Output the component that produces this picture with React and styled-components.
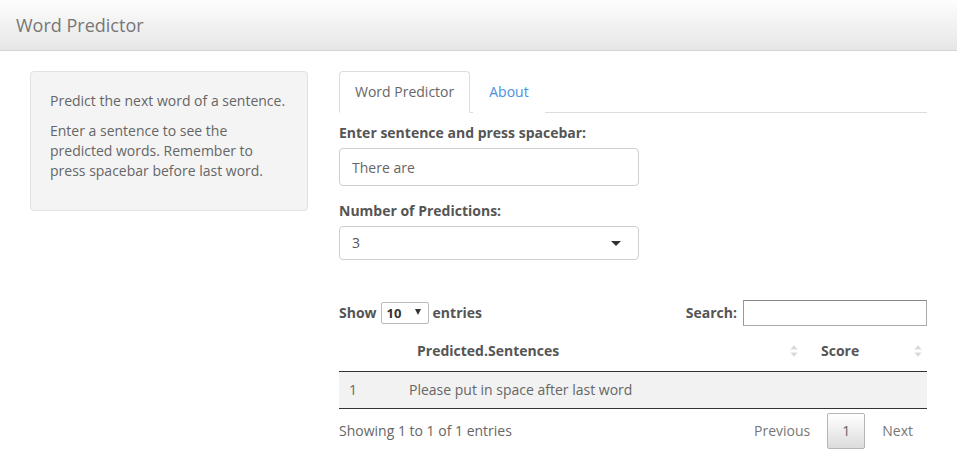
import React from 'react';
import styled, { createGlobalStyle } from 'styled-components';

const GlobalStyle = createGlobalStyle`
  body {
    margin: 0;
    font-family: "Open Sans", "Liberation Sans", sans-serif;
    font-size: 14px;
    line-height: 20px;
    color: #666;
    background: #fff;
  }
  * { box-sizing: border-box; }
`;

const App = () => {
  return (
    <>
      <GlobalStyle />
      <Navbar>
        <Brand>Word Predictor</Brand>
      </Navbar>
      <Page>
        <Sidebar>
          <Well>
            <Para>Predict the next word of a sentence.</Para>
            <Para>Enter a sentence to see the predicted words. Remember to press spacebar before last word.</Para>
          </Well>
        </Sidebar>
        <Main>
          <Tabs>
            <Tab active>Word Predictor</Tab>
            <Tab>About</Tab>
          </Tabs>
          <FormGroup>
            <Label>Enter sentence and press spacebar:</Label>
            <TextInput defaultValue="There are" />
          </FormGroup>
          <FormGroup>
            <Label>Number of Predictions:</Label>
            <SelectBox>
              <span>3</span>
              <Caret />
            </SelectBox>
          </FormGroup>
          <TableWrap>
            <TableTop>
              <LengthControl>
                Show
                <SmallSelect>
                  <span>10</span>
                  <SmallCaret />
                </SmallSelect>
                entries
              </LengthControl>
              <SearchControl>
                Search:
                <SearchInput />
              </SearchControl>
            </TableTop>
            <Table>
              <colgroup>
                <col style={{ width: 60 }} />
                <col style={{ width: 404 }} />
                <col />
              </colgroup>
              <thead>
                <tr>
                  <Th></Th>
                  <Th>
                    Predicted.Sentences
                    <SortIcon />
                  </Th>
                  <Th>
                    Score
                    <SortIcon />
                  </Th>
                </tr>
              </thead>
              <tbody>
                <Row odd>
                  <Td>1</Td>
                  <Td>Please put in space after last word</Td>
                  <Td></Td>
                </Row>
              </tbody>
            </Table>
            <TableBottom>
              <Info>Showing 1 to 1 of 1 entries</Info>
              <Pager>
                <PageLink>Previous</PageLink>
                <PageButton>1</PageButton>
                <PageLink last>Next</PageLink>
              </Pager>
            </TableBottom>
          </TableWrap>
        </Main>
      </Page>
    </>
  );
};

const SortIcon = () => (
  <SortSvg width="8" height="14" viewBox="0 0 8 14">
    <path d="M4 1 L7.5 5.5 L0.5 5.5 Z" fill="#d9d9d9" />
    <path d="M4 13 L7.5 8.5 L0.5 8.5 Z" fill="#d9d9d9" />
  </SortSvg>
);

export default App;

const Navbar = styled.div`
  height: 51px;
  background: linear-gradient(#fdfdfd, #e6e6e6);
  border-bottom: 1px solid #d4d4d4;
  display: flex;
  align-items: center;
  padding-left: 16px;
`;

const Brand = styled.div`
  font-size: 18px;
  color: #777;
  line-height: 20px;
  padding-bottom: 1px;
`;

const Page = styled.div`
  display: flex;
  gap: 31px;
  padding: 20px 30px 0 30px;
`;

const Sidebar = styled.div`
  width: 278px;
  flex-shrink: 0;
`;

const Well = styled.div`
  background: #f4f4f4;
  border: 1px solid #e2e2e2;
  border-radius: 4px;
  padding: 19px 19px 19px;
  min-height: 140px;
`;

const Para = styled.p`
  margin: 0 0 10px;
  &:last-child { margin-bottom: 0; }
`;

const Main = styled.div`
  flex: 1;
  min-width: 0;
`;

const Tabs = styled.div`
  display: flex;
  border-bottom: 1px solid #ddd;
  height: 42px;
  margin-bottom: 10px;
`;

const Tab = styled.div`
  padding: 10px 15px 11px;
  margin-right: 3px;
  border: 1px solid ${p => (p.active ? '#ddd' : 'transparent')};
  border-bottom-color: ${p => (p.active ? '#fff' : 'transparent')};
  border-radius: 4px 4px 0 0;
  background: #fff;
  color: ${p => (p.active ? '#666' : '#4a90e2')};
  height: 42px;
  line-height: 20px;
`;

const FormGroup = styled.div`
  margin-bottom: 15px;
`;

const Label = styled.div`
  font-weight: 700;
  color: #555;
  margin-bottom: 5px;
`;

const TextInput = styled.input`
  display: block;
  width: 300px;
  height: 38px;
  padding: 6px 12px;
  font-family: inherit;
  font-size: 14px;
  color: #666;
  border: 1px solid #cfcfcf;
  border-radius: 4px;
  outline: none;
`;

const SelectBox = styled.div`
  width: 300px;
  height: 34px;
  border: 1px solid #cfcfcf;
  border-radius: 4px;
  display: flex;
  align-items: center;
  justify-content: space-between;
  padding: 0 17px 0 12px;
  color: #555;
`;

const Caret = styled.span`
  width: 0;
  height: 0;
  border-left: 5px solid transparent;
  border-right: 5px solid transparent;
  border-top: 5px solid #333;
`;

const TableWrap = styled.div`
  margin-top: 40px;
  color: #555;
`;

const TableTop = styled.div`
  display: flex;
  justify-content: space-between;
  align-items: center;
  height: 26px;
`;

const LengthControl = styled.div`
  display: flex;
  align-items: center;
  gap: 4px;
  font-weight: 700;
`;

const SmallSelect = styled.div`
  width: 48px;
  height: 22px;
  border: 1px solid #bbb;
  border-radius: 2px;
  display: flex;
  align-items: center;
  justify-content: space-between;
  padding: 0 7px 0 5px;
  color: #333;
  font-weight: 700;
  font-size: 13px;
`;

const SmallCaret = styled.span`
  width: 0;
  height: 0;
  border-left: 3.5px solid transparent;
  border-right: 3.5px solid transparent;
  border-top: 6px solid #333;
  margin-top: -2px;
`;

const SearchControl = styled.div`
  display: flex;
  align-items: center;
  gap: 6px;
  font-weight: 700;
`;

const SearchInput = styled.input`
  width: 184px;
  height: 26px;
  border: 1px solid #aaa;
  border-top-color: #888;
  border-left-color: #999;
  outline: none;
`;

const Table = styled.table`
  width: 100%;
  border-collapse: collapse;
  table-layout: fixed;
  margin-top: 9px;
`;

const Th = styled.th`
  position: relative;
  text-align: left;
  font-weight: 700;
  padding: 6px 18px 9px;
  height: 36px;
  border-bottom: 1px solid #333;
  color: #555;
`;

const SortSvg = styled.svg`
  position: absolute;
  right: 5px;
  top: 9px;
`;

const Row = styled.tr`
  background: ${p => (p.odd ? '#f2f2f2' : '#fff')};
  border-bottom: 1px solid #333;
`;

const Td = styled.td`
  padding: 8px 10px;
  height: 36px;
  color: #666;
`;

const TableBottom = styled.div`
  display: flex;
  justify-content: space-between;
  align-items: center;
  padding-top: 4px;
`;

const Info = styled.div`
  color: #666;
`;

const Pager = styled.div`
  display: flex;
  align-items: center;
`;

const PageLink = styled.div`
  padding: ${p => (p.last ? '8px 14px 8px 17px' : '8px 17px 8px 16px')};
  color: #777;
`;

const PageButton = styled.div`
  width: 38px;
  height: 36px;
  border: 1px solid #b5b5b5;
  border-radius: 2px;
  background: linear-gradient(#fff, #dcdcdc);
  display: flex;
  align-items: center;
  justify-content: center;
  color: #666;
`;
